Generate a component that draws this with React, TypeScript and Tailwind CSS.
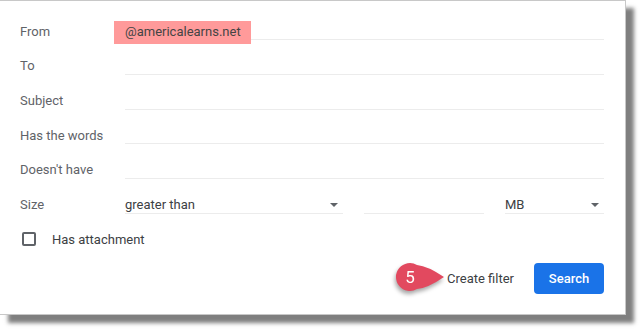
import { ReactNode } from "react";

const Row = ({ label, children }: { label: string; children: ReactNode }) => (
  <div className="flex items-center h-[34.7px]">
    <div className="w-[125px] shrink-0 pl-5 text-[13px] text-[#5f6368]">{label}</div>
    <div className="flex-1 flex items-center">{children}</div>
  </div>
);

const Field = ({ children, className = "flex-1" }: { children?: ReactNode; className?: string }) => (
  <div className={`relative h-[18px] leading-[17px] border-b border-[#ececec] text-[13px] text-[#3c4043] ${className}`}>
    {children}
  </div>
);

const Caret = () => (
  <svg width="8" height="4" viewBox="0 0 8 4" className="absolute right-[5px] top-[7px]">
    <path d="M0 0h8L4 4z" fill="#5f6368" />
  </svg>
);

const Badge = () => (
  <svg
    width="52"
    height="32"
    viewBox="0 0 52 32"
    className="absolute left-[-53px] top-[-8px] drop-shadow-[-1px_3px_2px_rgba(0,0,0,0.35)]"
  >
    <path d="M23 3.9Q34 5 50 16Q34 27 23 28.1A14 14 0 1 1 23 3.9Z" fill="#e2495f" />
    <text x="16" y="22" textAnchor="middle" fontSize="17" fill="#fff" fontFamily="Roboto, sans-serif">
      5
    </text>
  </svg>
);

export default function App() {
  return (
    <div className="w-[644px] h-[333px] bg-white font-['Roboto',_sans-serif]">
      <div className="w-[626px] h-[315px] bg-white border-t border-r border-b border-[#c8c8c8] shadow-[8px_8px_4px_rgba(0,0,0,0.5)] pt-[13px] pr-[21px]">
        <Row label="From">
          <Field>
            <span className="absolute left-[-11px] top-[-1px] h-[23px] w-[137px] bg-[#ff9a9a] pl-[11px] leading-[22px] text-[#444]">
              @americalearns.net
            </span>
          </Field>
        </Row>
        <Row label="To">
          <Field />
        </Row>
        <Row label="Subject">
          <Field />
        </Row>
        <Row label="Has the words">
          <Field />
        </Row>
        <Row label="Doesn't have">
          <Field />
        </Row>
        <Row label="Size">
          <Field className="w-[218px]">
            greater than
            <Caret />
          </Field>
          <Field className="w-[120px] ml-[21px]" />
          <Field className="flex-1 ml-[21px]">
            MB
            <Caret />
          </Field>
        </Row>
        <div className="flex items-center h-[34.7px] pl-[22px]">
          <div className="w-[14px] h-[14px] border-2 border-[#5f6368] rounded-[2px]" />
          <span className="ml-4 text-[13px] text-[#3c4043]">Has attachment</span>
        </div>
        <div className="flex justify-end items-center mt-[6px]">
          <div className="relative text-[13px] text-[#3c4043] mr-5">
            <Badge />
            Create filter
          </div>
          <button className="w-[70px] h-[31px] rounded bg-[#1a73e8] text-white text-[13px] font-medium">
            Search
          </button>
        </div>
      </div>
    </div>
  );
}
